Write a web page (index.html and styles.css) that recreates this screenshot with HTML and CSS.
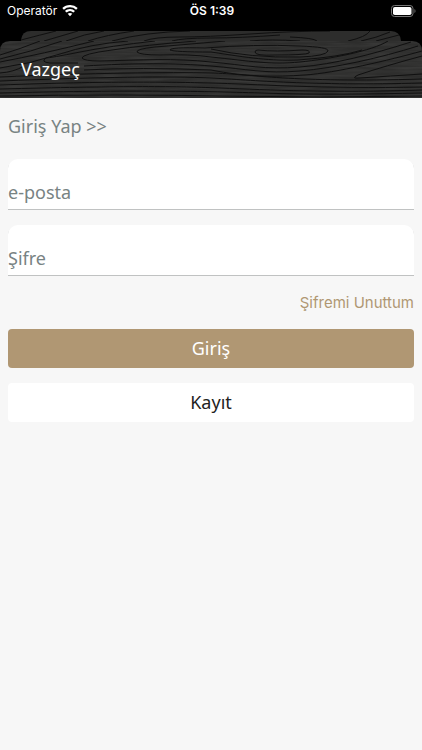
FILE: index.html
```html
<!DOCTYPE html>
<html lang="tr">
<head>
<meta charset="utf-8">
<meta name="viewport" content="width=device-width, initial-scale=1">
<title>Giriş Yap</title>
<link rel="stylesheet" href="styles.css">
</head>
<body>
<div class="status">
  <div class="carrier">
    <span>Operatör</span>
    <svg class="wifi" width="16" height="12" viewBox="0 0 16 12" fill="#fff" aria-hidden="true">
      <path d="M8 0C5 0 2.300 1.100.300 3L1.900 4.700a8.800 8.800 0 0 1 12.200 0L15.700 3A11.200 11.200 0 0 0 8 0z"/>
      <path d="M8 4C6.100 4 4.300 4.700 3 5.900L4.600 7.500a5 5 0 0 1 6.800 0L13 5.900A7.400 7.400 0 0 0 8 4z"/>
      <path d="M8 7.900c-.9 0-1.700.3-2.300.9L8 11.300l2.300-2.500c-.6-.6-1.400-.9-2.300-.9z"/>
    </svg>
  </div>
  <time class="clock">ÖS 1:39</time>
  <svg class="battery" width="26" height="12" viewBox="0 0 26 12" aria-hidden="true">
    <rect x=".5" y=".5" width="21.500" height="11" rx="3" fill="none" stroke="#777"/>
    <rect x="2" y="2" width="18.500" height="8" rx="1.800" fill="#fff"/>
    <path d="M23.500 4v4c1.300-.6 1.300-3.400 0-4z" fill="#777"/>
  </svg>
</div>
<header class="header">
  <svg class="wood" viewBox="0 31 422 67" preserveAspectRatio="none" aria-hidden="true">
    <defs>
      <clipPath id="back"><path d="M21 41V40Q22 31 31 31H391Q400 31 401 41z"/></clipPath>
      <clipPath id="front"><path d="M0 98V51Q0 41 10 41H412Q422 41 422 51V98z"/></clipPath>
      <filter id="grain" x="0" y="0" width="100%" height="100%">
        <feTurbulence type="fractalNoise" baseFrequency=".03 .4" numOctaves="2" seed="4"/>
        <feColorMatrix values="0 0 0 0 1  0 0 0 0 1  0 0 0 0 1  .12 0 0 0 -.04"/>
      </filter>
    </defs>
    <g clip-path="url(#back)">
      <rect y="31" width="422" height="10" fill="#2d2d2c"/>
      <g class="rings">
        <path d="M21 40Q40 35 56 31M44 41L78 31M66 41Q84 34 104 31M88 41Q106 35 134 31M112 41Q145 32 190 31M144 41Q154 37 180 37T250 34T330 31M172 41Q182 38 211 38T280 35M250 41Q270 39 300 41M290 37Q314 38 317 41M348 41Q366 37 370 31M361 41Q376 38 390 32M376 41L399 35"/>
      </g>
    </g>
    <g clip-path="url(#front)">
      <rect y="41" width="422" height="57" fill="#2d2d2c"/>
      <rect y="41" width="422" height="57" filter="url(#grain)"/>
      <g class="rings">
        <path d="M0 55Q20 49 40 41M0 59Q30 52 62 41M0 62Q42 54 94 41M0 68Q30 64 60 54T128 41M0 73Q14 72 24 66"/>
        <path d="M155 41Q110 46 80 52T46 58Q40 62 50 63H78"/>
        <path d="M196 41Q145 45 112 50Q82 54 82 58Q84 61 100 61C140 60 175 58 211 62C245 65 265 70 300 67S370 55 411 42"/>
        <path d="M225 41Q180 45 155 47Q136 49 137 52Q140 55 160 55Q190 54 211 57C250 61 270 65 300 62S372 51 388 41"/>
        <path d="M205 48Q170 47 170 50Q174 52 211 52C250 58 270 61 298 60Q340 57 362 50"/>
        <path d="M205 48Q255 44 300 46Q329 47 328 51Q326 56 300 57Q250 58 211 49"/>
        <path d="M258 50Q275 52 302 50Q311 50 309 53Q306 55 275 55Q255 56 255 52Q255 50 258 50"/>
        <path d="M84 66C135 63 175 63 211 66S265 74 300 71S380 58 418 46"/>
        <path d="M84 70Q140 67 211 70C245 77 275 77 305 75S390 60 422 51"/>
        <path d="M422 56Q385 66 358 75Q350 79 360 78Q390 76 422 74"/>
        <path d="M0 77C90 73 170 72 211 73S290 83 422 79M0 81C100 77 170 76 211 78S310 86 422 83M0 85C110 81 170 82 211 83S320 89 422 87M0 89C120 86 170 86 220 88S330 93 422 90M0 93C120 90 200 91 260 93S370 94 422 93M0 96Q120 94 220 96T422 96"/>
      </g>
    </g>
  </svg>
  <a class="cancel" href="#">Vazgeç</a>
</header>
<main class="content">
  <h1 class="title">Giriş Yap &gt;&gt;</h1>
  <form class="form">
    <input class="field" type="email" aria-label="e-posta" placeholder="e-posta">
    <input class="field" type="password" aria-label="Şifre" placeholder="Şifre">
    <a class="forgot" href="#">Şifremi Unuttum</a>
    <button class="button primary" type="submit">Giriş</button>
    <button class="button" type="button">Kayıt</button>
  </form>
</main>
</body>
</html>
```
FILE: styles.css
```css
* {
  box-sizing: border-box;
}

body {
  margin: 0;
  min-height: 100vh;
  background: #f7f7f7;
  color: #788383;
  font-family: "Noto Sans", "Open Sans", sans-serif;
  font-size: 18px;
}

.status {
  display: grid;
  grid-template-columns: 1fr auto 1fr;
  align-items: center;
  padding: 0 5px 9px 7px;
  background: #000;
  color: #fff;
  font: 12px/22px Inter, sans-serif;
}

.carrier {
  display: flex;
  align-items: center;
  gap: 5px;
}

.clock {
  font-weight: 600;
}

.battery {
  justify-self: end;
}

.header {
  position: relative;
  padding: 24px 21px 15px;
  background: #000;
  line-height: 28px;
}

.wood {
  position: absolute;
  inset: 0;
  width: 100%;
  height: 100%;
}

.rings {
  fill: none;
  stroke: #101010;
  stroke-width: 1;
}

.cancel {
  position: relative;
  display: block;
  color: #fff;
  text-decoration: none;
}

.content {
  padding: 16px 8px;
}

.title {
  margin: 0 0 21px;
  font-size: 18px;
  font-weight: 400;
  line-height: 24px;
}

.form {
  display: flex;
  flex-direction: column;
  gap: 15px;
}

.field {
  width: 100%;
  height: 51px;
  padding: 16px 0 2px;
  border: 0;
  border-radius: 10px 10px 0 0;
  background: #fff;
  box-shadow: inset 0 -1px #c0c2c2;
  color: #222;
  font: inherit;
}

.field::placeholder {
  color: #788383;
  opacity: 1;
}

.forgot {
  align-self: flex-end;
  color: #b09773;
  font: 15px/23px Inter, sans-serif;
  text-decoration: none;
}

.button {
  height: 39px;
  padding: 0 0 2px;
  border: 0;
  border-radius: 4px;
  background: #fff;
  color: #222;
  font: inherit;
}

.primary {
  background: #b09773;
  color: #fff;
}
```
